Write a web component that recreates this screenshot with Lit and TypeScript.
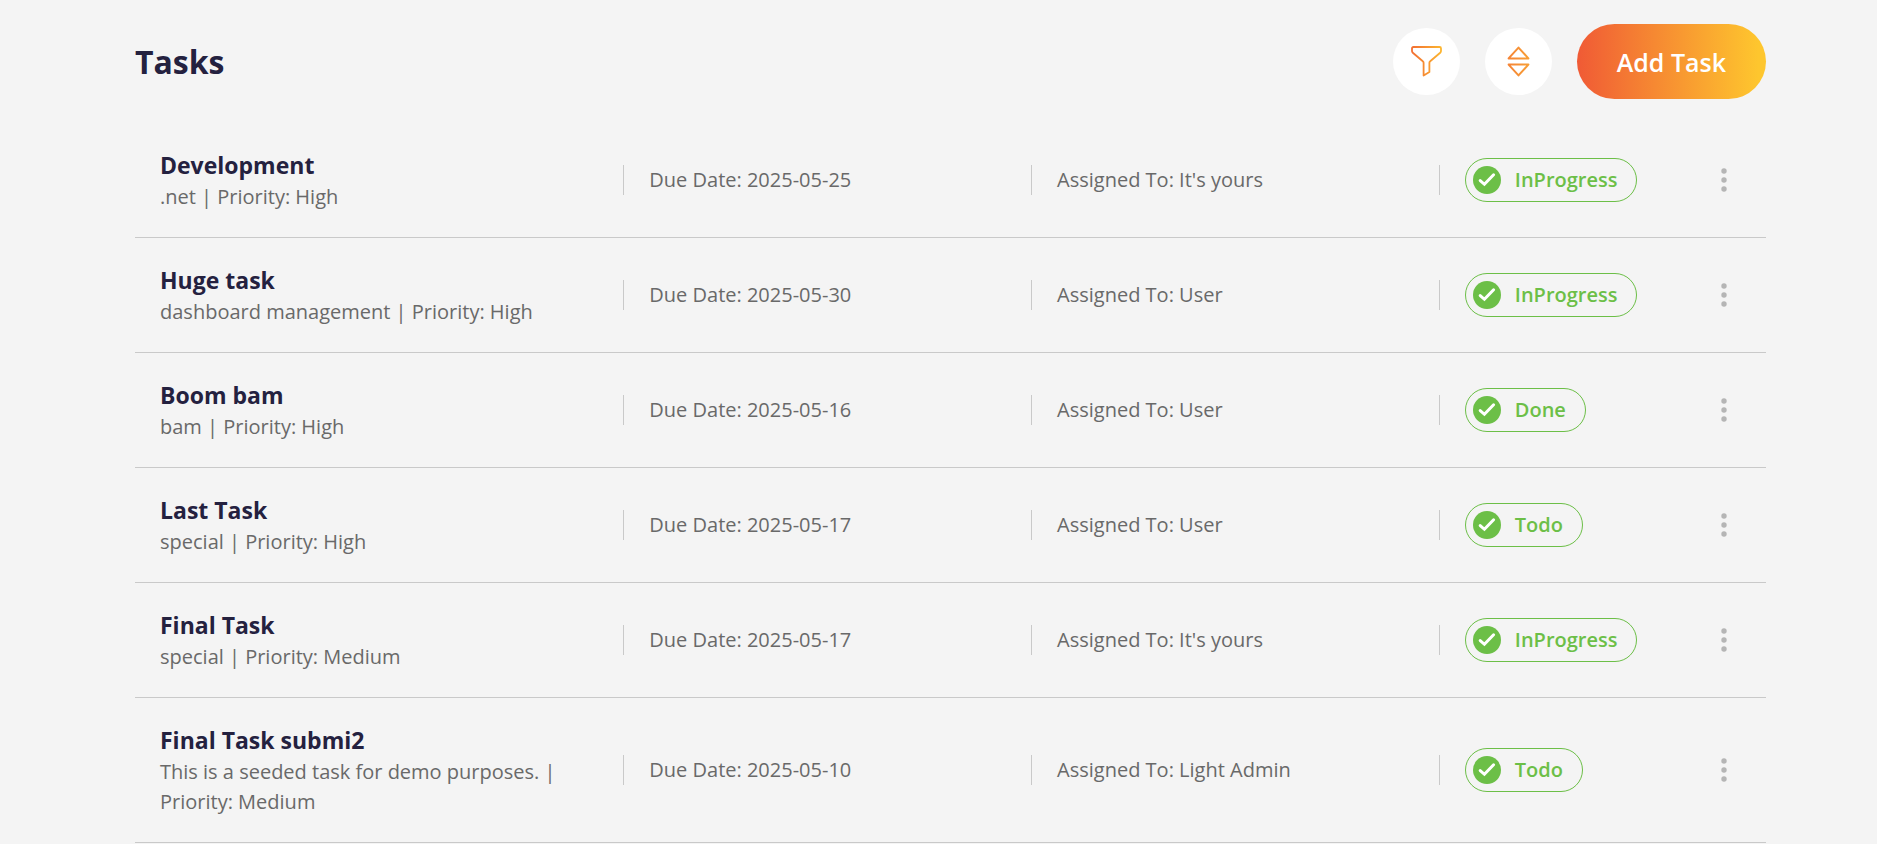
import { LitElement, html, css } from "lit";
import { customElement, property, state } from "lit/decorators.js";

interface Task {
  title: string;
  project: string;
  priority: string;
  due: string;
  assignee: string;
  status: string;
}

@customElement("task-row")
class TaskRow extends LitElement {
  @property({ attribute: false }) task!: Task;

  static styles = css`
    :host {
      display: grid;
      grid-template-columns: 30fr 25fr 25fr 20fr;
      align-items: center;
      padding: 25px 0;
      border-bottom: 1px solid #c9c9c9;
      color: #696969;
      font-size: 20px;
      line-height: 30px;
    }
    .summary {
      padding: 0 25px;
    }
    .title {
      margin: 0;
      color: #24213f;
      font-size: 23px;
      font-weight: 700;
      line-height: 34px;
    }
    .detail {
      margin: 0;
    }
    .cell {
      position: relative;
      min-height: 30px;
      padding: 0 25px;
    }
    .cell::before {
      content: "";
      position: absolute;
      top: 0;
      bottom: 0;
      left: -1px;
      border-left: 1px solid #c9c9c9;
    }
    .last {
      display: flex;
      align-items: center;
      justify-content: space-between;
      height: 30px;
    }
    .status {
      display: flex;
      align-items: center;
      gap: 14px;
      box-sizing: border-box;
      height: 44px;
      padding: 0 19px 0 7px;
      border: 1px solid #6cbf47;
      border-radius: 22px;
      color: #6cbf47;
      font-weight: 600;
    }
    .check {
      display: block;
      width: 28px;
      height: 28px;
    }
    .menu {
      display: flex;
      align-items: center;
      justify-content: center;
      width: 34px;
      height: 34px;
      padding: 0;
      border: 0;
      background: none;
      cursor: pointer;
    }
  `;

  render() {
    const t = this.task;
    return html`
      <div class="summary">
        <h2 class="title">${t.title}</h2>
        <p class="detail">${`${t.project} | Priority: ${t.priority}`}</p>
      </div>
      <div class="cell">${`Due Date: ${t.due}`}</div>
      <div class="cell">${`Assigned To: ${t.assignee}`}</div>
      <div class="cell last">
        <span class="status">
          <svg class="check" viewBox="0 0 28 28" aria-hidden="true">
            <circle cx="14" cy="14" r="14" fill="#6cbf47" />
            <path d="M7.2 14.6L11.4 18.3L20.6 8.8" fill="none" stroke="#fff" stroke-width="3" stroke-linecap="round" />
          </svg>
          ${t.status}
        </span>
        <button class="menu" type="button" aria-label="Task options">
          <svg width="6" height="24" viewBox="0 0 6 24" fill="#b5b5b5" aria-hidden="true">
            <circle cx="3" cy="3" r="2.7" />
            <circle cx="3" cy="12" r="2.7" />
            <circle cx="3" cy="21" r="2.7" />
          </svg>
        </button>
      </div>
    `;
  }
}

@customElement("app-root")
class AppRoot extends LitElement {
  @state() private tasks: Task[] = [
    { title: "Development", project: ".net", priority: "High", due: "2025-05-25", assignee: "It's yours", status: "InProgress" },
    { title: "Huge task", project: "dashboard management", priority: "High", due: "2025-05-30", assignee: "User", status: "InProgress" },
    { title: "Boom bam", project: "bam", priority: "High", due: "2025-05-16", assignee: "User", status: "Done" },
    { title: "Last Task", project: "special", priority: "High", due: "2025-05-17", assignee: "User", status: "Todo" },
    { title: "Final Task", project: "special", priority: "Medium", due: "2025-05-17", assignee: "It's yours", status: "InProgress" },
    { title: "Final Task submi2", project: "This is a seeded task for demo purposes.", priority: "Medium", due: "2025-05-10", assignee: "Light Admin", status: "Todo" },
  ];

  static styles = css`
    :host {
      display: block;
      box-sizing: border-box;
      min-height: 100vh;
      padding: 24px 111px 0 135px;
      background: #f4f4f4;
      font-family: "Open Sans", "Noto Sans", sans-serif;
    }
    .header {
      display: flex;
      align-items: center;
      justify-content: space-between;
      margin-bottom: 24px;
    }
    .heading {
      margin: 0;
      color: #24213f;
      font-size: 32px;
      font-weight: 700;
      line-height: 46px;
    }
    .actions {
      display: flex;
      align-items: center;
      gap: 25px;
    }
    .round {
      display: flex;
      align-items: center;
      justify-content: center;
      width: 67px;
      height: 67px;
      padding: 0;
      border: 0;
      border-radius: 50%;
      background: #fff;
      cursor: pointer;
    }
    .add {
      height: 75px;
      padding: 0 40px;
      border: 0;
      border-radius: 38px;
      background: linear-gradient(90deg, #f05a35, #f47a33 28%, #fec62e 96%);
      color: #fff;
      font-family: inherit;
      font-size: 25px;
      font-weight: 600;
      line-height: 34px;
      cursor: pointer;
    }
    .list {
      margin: 0;
      padding: 0;
      list-style: none;
    }
  `;

  render() {
    return html`
      <header class="header">
        <h1 class="heading">Tasks</h1>
        <div class="actions">
          <button class="round" type="button" aria-label="Filter">
            <svg width="31" height="31" viewBox="0 0 31 31" fill="none" stroke="url(#warm)" stroke-width="1.8" stroke-linejoin="round" aria-hidden="true">
              <defs>
                <linearGradient id="warm" gradientUnits="userSpaceOnUse" x1="1" y1="0" x2="30" y2="0">
                  <stop offset="0" stop-color="#f26f33" />
                  <stop offset="1" stop-color="#fcb52f" />
                </linearGradient>
              </defs>
              <path d="M2.4 1H28.6Q30 1 30 2.4V5Q30 6 29.2 6.7L19.2 15.2Q18.4 15.8 18.4 16.8V26L12.6 29.6V16.8Q12.6 15.8 11.8 15.2L1.8 6.7Q1 6 1 5V2.4Q1 1 2.4 1Z" />
            </svg>
          </button>
          <button class="round" type="button" aria-label="Sort">
            <svg width="23" height="31" viewBox="0 0 23 31" fill="none" stroke="url(#glow)" stroke-width="2" stroke-linejoin="round" aria-hidden="true">
              <defs>
                <linearGradient id="glow" gradientUnits="userSpaceOnUse" x1="0" y1="0" x2="23" y2="0">
                  <stop offset="0" stop-color="#f58235" />
                  <stop offset="1" stop-color="#f8a035" />
                </linearGradient>
              </defs>
              <path d="M11.5 1.6L21.4 12.4H1.6Z" />
              <path d="M11.5 29.4L21.4 18.6H1.6Z" />
            </svg>
          </button>
          <button class="add" type="button">Add Task</button>
        </div>
      </header>
      <ul class="list">
        ${this.tasks.map((task) => html`<li><task-row .task=${task}></task-row></li>`)}
      </ul>
    `;
  }
}
